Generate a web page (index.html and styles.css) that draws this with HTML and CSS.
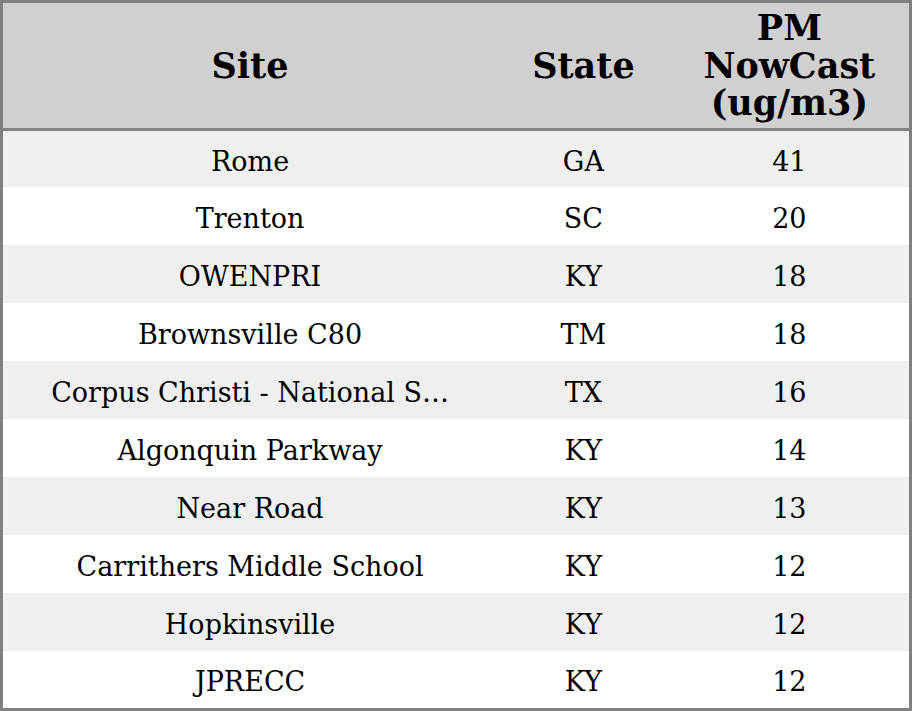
FILE: index.html
```html
<!DOCTYPE html>
<html>
<head>
<meta charset="utf-8">
<link rel="stylesheet" href="styles.css">
</head>
<body>
<table class="grid">
  <colgroup>
    <col class="c-site">
    <col class="c-state">
    <col class="c-pm">
  </colgroup>
  <thead>
    <tr>
      <th>Site</th>
      <th>State</th>
      <th>PM<br>NowCast<br>(ug/m3)</th>
    </tr>
  </thead>
  <tbody>
    <tr class="first"><td>Rome</td><td>GA</td><td>41</td></tr>
    <tr><td>Trenton</td><td>SC</td><td>20</td></tr>
    <tr><td>OWENPRI</td><td>KY</td><td>18</td></tr>
    <tr><td>Brownsville C80</td><td>TM</td><td>18</td></tr>
    <tr><td>Corpus Christi - National S…</td><td>TX</td><td>16</td></tr>
    <tr><td>Algonquin Parkway</td><td>KY</td><td>14</td></tr>
    <tr><td>Near Road</td><td>KY</td><td>13</td></tr>
    <tr><td>Carrithers Middle School</td><td>KY</td><td>12</td></tr>
    <tr><td>Hopkinsville</td><td>KY</td><td>12</td></tr>
    <tr class="last"><td>JPRECC</td><td>KY</td><td>12</td></tr>
  </tbody>
</table>
</body>
</html>
```
FILE: styles.css
```css
html, body {
  margin: 0;
  padding: 0;
  background: #ffffff;
}
.grid {
  width: 912px;
  height: 711px;
  border-collapse: collapse;
  table-layout: fixed;
  border: 3px solid #808080;
  font-family: "DejaVu Serif", serif;
  color: #000;
}
.c-site { width: 494px; }
.c-state { width: 172px; }
.c-pm { width: 240px; }
th {
  background: #d0d0d0;
  font-size: 35px;
  font-weight: bold;
  line-height: 37.5px;
  height: 125px;
  padding: 0;
  text-align: center;
  vertical-align: middle;
  border-bottom: 3px solid #808080;
}
td {
  font-size: 27px;
  height: 54px;
  text-align: center;
  vertical-align: middle;
  padding: 4px 0 0;
  white-space: nowrap;
}
tbody tr.first td { height: 52px; }
tbody tr.last td { height: 53px; }
tbody tr:nth-child(odd) td { background: #efefef; }
tbody tr:nth-child(even) td { background: #ffffff; }
```
